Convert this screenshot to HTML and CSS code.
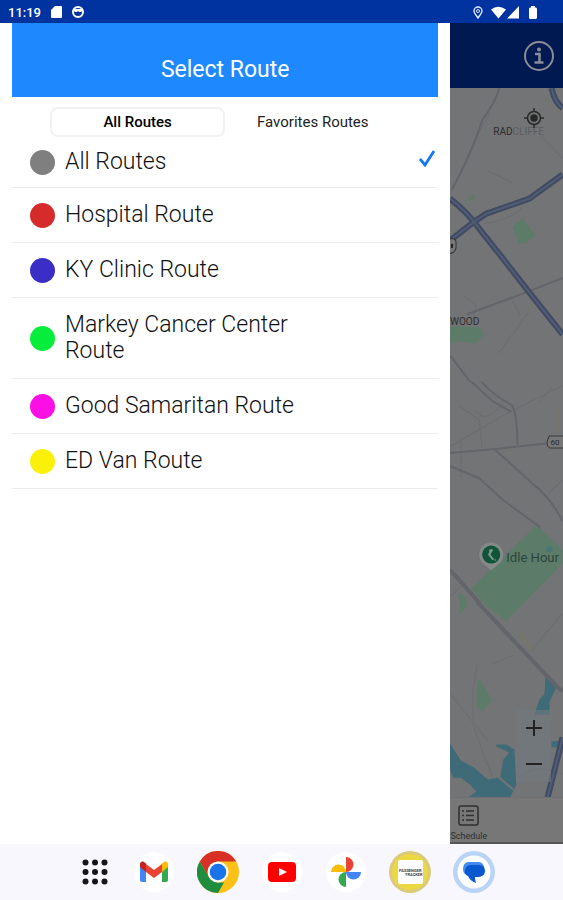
FILE: index.html
```html
<!DOCTYPE html>
<html lang="en">
<head>
  <meta charset="UTF-8">
  <meta name="viewport" content="width=device-width, initial-scale=1.0">
  <title>Select Route</title>
  <link rel="stylesheet" href="styles.css">
</head>
<body>
  <header class="status-bar">
    <span class="clock">11:19</span>
    <svg width="11" height="12" viewBox="0 0 11 12"><path d="M4 0h6a1 1 0 0 1 1 1v10a1 1 0 0 1-1 1H1a1 1 0 0 1-1-1V4z" fill="#fff"/></svg>
    <svg width="12" height="12" viewBox="0 0 12 12"><circle cx="6" cy="6" r="5" fill="none" stroke="#fff" stroke-width="2"/><path d="M2 3h8v2l-1 1H7L6 5 5 6H3L2 5z" fill="#fff"/></svg>
    <span class="status-icons">
      <svg width="10" height="13" viewBox="0 0 10 13" fill="none" stroke="#dfe8ff"><path d="M5 12C3 9 1 7 1 5a4 4 0 0 1 8 0c0 2-2 4-4 7z" stroke-width="1.4"/><circle cx="5" cy="5" r="1.5"/></svg>
      <svg width="30" height="13" viewBox="0 0 30 13" fill="#fff"><path d="M0 3.500Q7-2 15 3.500L7.500 12.500zM28 0v12.500H16z"/></svg>
      <svg width="8" height="13" viewBox="0 0 8 13" fill="#fff"><path d="M2 0h4v1.500h1l1 1V12l-1 1H1l-1-1V2.500l1-1h1z"/></svg>
    </span>
  </header>

  <main class="screen">
    <section class="drawer">
      <h1 class="drawer-title">Select Route</h1>
      <div class="tabs">
        <button class="tab active" type="button">All Routes</button>
        <button class="tab" type="button">Favorites Routes</button>
      </div>
      <ul class="routes">
        <li><button class="route" type="button"><span class="dot gray"></span><span class="name">All Routes</span>
          <svg class="check" width="16" height="17" viewBox="0 0 16 17"><path d="M1 9l5 6L15 1" fill="none" stroke="#1677f5" stroke-width="2.800"/></svg></button></li>
        <li><button class="route" type="button"><span class="dot red"></span><span class="name">Hospital Route</span></button></li>
        <li><button class="route" type="button"><span class="dot blue"></span><span class="name">KY Clinic Route</span></button></li>
        <li><button class="route" type="button"><span class="dot green"></span><span class="name">Markey Cancer Center Route</span></button></li>
        <li><button class="route" type="button"><span class="dot pink"></span><span class="name">Good Samaritan Route</span></button></li>
        <li><button class="route" type="button"><span class="dot yellow"></span><span class="name">ED Van Route</span></button></li>
      </ul>
    </section>

    <section class="behind">
      <div class="app-bar">
        <button class="info" type="button" aria-label="Info">
          <svg width="30" height="30" viewBox="0 0 30 30" fill="none" stroke="#8b8b96"><circle cx="15" cy="15" r="14" stroke-width="2"/><path d="M11 13h4.500v8M10.500 21.500h9" stroke-width="2.500"/><circle cx="15" cy="8.500" r="1" stroke-width="2"/></svg>
        </button>
      </div>

      <div class="map">
        <svg class="map-art" viewBox="451 88 112 709" preserveAspectRatio="xMinYMin slice">
          <!-- parks -->
          <g fill="#5d7b69">
            <path d="M513 226l10-8 13 16-10 9-7-1z"/>
            <path d="M466 201l8-7 3 2-6 4zM451 325l31 1 2 8-8 8-14-2-9 2-2-3z"/>
            <path d="M537 523l26 24v14l-56 57-18-13-17-19z"/>
            <path d="M478 679l3-3 12 22-10 10-6-5z"/>
            <path d="M462 590q10 9 3 17l-6 5q4-10 0-19z"/>
          </g>
          <!-- water -->
          <g fill="#3f6a78">
            <path d="M546 672l12 9-8 18v12h-15l5-15 5-5z"/>
            <path d="M451 740l11 17 13 7 14 12 12-3 3-17 6-7-13-6v-2h10l8 5 2 35-6 12-5 4h-42l13-9-6-7-9-7h-8l-4-12z"/>
            <path d="M552 738l11-1v7h-11z"/>
          </g>
          <path d="M499 773l15 13" stroke="#737475" stroke-width="2"/>
          <!-- minor streets -->
          <g fill="none" stroke="#6b6d70" stroke-width="1">
            <path d="M485 223q28-4 38-17M491 112l-12 22M541 135l22 23M488 170l25 12M465 295l12 9-3 13M513 299l8 15M530 310l-31 42M460 404l20 14 3 28M451 445l54-32 58-29M504 401q-13 16-21 13l-8-5M540 400l12-14M462 439v36M549 491l14-13M492 661l23-9M478 662l-4 24v36l8 22 12 31M451 594l13-12M451 690l38 48M519 774q16-15 44-4M563 610l-31 38"/>
          </g>
          <g fill="none" stroke="#63656b" stroke-width="2">
            <path d="M500 88q-3 13-17 32-8 27-30 69M468 313l54-20 41-16M472 380l22 20 18 10M482 380q14 15 30 23 6 7 6 40M451 451l45-4 56-6M496 448l39 35q17 14 28 36M451 464l29 12 24 22 37 27M451 354l20 26"/>
            <path d="M451 567l30 34M478 599l79 84 6 5" stroke-width="4"/>
          </g>
          <path d="M521 630l10 16" stroke="#77766c" stroke-width="4"/>
          <path d="M559 405v25" stroke="#77756a" stroke-width="2"/>
          <!-- highways -->
          <g fill="none" stroke="#3f4a63" stroke-width="6">
            <path d="M451 198q17 13 30 31 27 34 51 65l31 39M452 239l23-18 12-8 43-15 33-24M552 88q3 14 11 20M547 798l16-64"/>
          </g>
          <g fill="none" stroke="#525d75" stroke-width="2">
            <path d="M451 198q17 13 30 31 27 34 51 65l31 39M452 239l23-18 12-8 43-15 33-24M552 88q3 14 11 20M547 798l16-64"/>
          </g>
          <!-- road shields -->
          <path d="M447 238h7q3 0 3 4v5q-1 5-7 6h-3z" fill="#777" stroke="#333"/>
          <path d="M453 243v4" stroke="#222" stroke-width="2"/>
          <path d="M550 434h16v12h-16q-5-4 0-12z" fill="#777" stroke="#3b3b3b"/>
          <text x="551" y="443" class="shield">60</text>
          <!-- golf pin -->
          <path d="M492 568l-8-7a12 12 0 1 1 16 0z" fill="#858987"/>
          <circle cx="492" cy="552" r="9" fill="#10543a"/>
          <path d="M493 547l-3 5 4 5M491 547v4M496 557v1" stroke="#859a8f" stroke-width="2" fill="none"/>
          <circle cx="550" cy="547" r="3" fill="#477578"/>
          <text x="494" y="135" class="place">RAD<tspan class="faded">CLIFFE</tspan></text>
          <text x="451" y="324" class="place">WOOD</text>
          <text x="507" y="559" class="poi">Idle Hour</text>
        </svg>
        <button class="locate" type="button" aria-label="My location">
          <svg width="20" height="20" viewBox="0 0 20 20" fill="none" stroke="#282828" stroke-width="1.500"><circle cx="10" cy="10" r="6.500"/><circle cx="10" cy="10" r="3" fill="#282828"/><path d="M10 0v4M10 16v4M0 10h4M16 10h4"/></svg>
        </button>
        <div class="zoom">
          <button type="button" aria-label="Zoom in"><svg width="16" height="16" viewBox="0 0 16 16"><path d="M8 0v16M0 8h16" stroke="#222" stroke-width="2"/></svg></button>
          <button type="button" aria-label="Zoom out"><svg width="16" height="16" viewBox="0 0 16 16"><path d="M0 8h16" stroke="#222" stroke-width="2"/></svg></button>
        </div>
      </div>

      <nav class="tab-bar">
        <a class="schedule" href="#schedule">
          <svg width="21" height="21" viewBox="0 0 21 21" fill="none" stroke="#2f2f2f" stroke-width="1.500"><rect x="1" y="1" width="19" height="19" rx="2"/><path d="M4 6h2M8 6h8M4 10.500h2M8 10.500h8M4 15h2M8 15h8"/></svg>
          <span>Schedule</span>
        </a>
      </nav>
    </section>
  </main>

  <footer class="dock">
    <button class="apps" type="button" aria-label="All apps">
      <svg width="26" height="26" viewBox="0 0 26 26"><g fill="#15151a"><circle cx="3.500" cy="3.500" r="3"/><circle cx="13" cy="3.500" r="3"/><circle cx="22.500" cy="3.500" r="3"/><circle cx="3.500" cy="13" r="3"/><circle cx="13" cy="13" r="3"/><circle cx="22.500" cy="13" r="3"/><circle cx="3.500" cy="22.500" r="3"/><circle cx="13" cy="22.500" r="3"/><circle cx="22.500" cy="22.500" r="3"/></g></svg>
    </button>
    <button type="button" aria-label="Gmail">
      <svg viewBox="0 0 42 42"><circle cx="21" cy="21" r="20" fill="#fff"/><path d="M7 14v15a2 2 0 0 0 2 2h4V18z" fill="#4285f4"/><path d="M29 18v13h4a2 2 0 0 0 2-2V14z" fill="#34a853"/><path d="M29 12.500l2-1.500c2-1 4 0 4 2.500V16l-6 5z" fill="#fbbc04"/><path d="M13 13l8 6 8-6v8l-8 6-8-6z" fill="#ea4335"/><path d="M13 12.500L11 11c-2-1-4 0-4 2.500V16l6 5z" fill="#c5221f"/></svg>
    </button>
    <button type="button" aria-label="Chrome">
      <svg viewBox="0 0 42 42"><circle cx="21" cy="21" r="21" fill="#fbc116"/><path d="M2.800 10.500A21 21 0 0 1 39.200 10.500H21L11.900 26.200z" fill="#d93025"/><path d="M2.800 10.500L11.900 26.200 21 31.500h6L21 42A21 21 0 0 1 2.800 10.500z" fill="#1e8e3e"/><circle cx="21" cy="21" r="10.500" fill="#fff"/><circle cx="21" cy="21" r="8.300" fill="#1a73e8"/></svg>
    </button>
    <button type="button" aria-label="YouTube">
      <svg viewBox="0 0 42 42"><circle cx="21" cy="21" r="20" fill="#fff"/><rect x="7" y="11" width="28" height="20" rx="4" fill="#f00"/><path d="M18 17v8l8-4z" fill="#fff"/></svg>
    </button>
    <button type="button" aria-label="Photos">
      <svg viewBox="0 0 42 42"><circle cx="21" cy="21" r="20" fill="#fff"/><path d="M21 6a7.500 7.500 0 0 1 0 15z" fill="#ea4335"/><path d="M36 21a7.500 7.500 0 0 1-15 0z" fill="#4285f4"/><path d="M21 36a7.500 7.500 0 0 1 0-15z" fill="#34a853"/><path d="M6 21a7.500 7.500 0 0 1 15 0z" fill="#fbbc04"/></svg>
    </button>
    <button type="button" aria-label="Passenger">
      <svg viewBox="0 0 42 42"><circle cx="21" cy="21" r="21" fill="#d9ca7c"/><circle cx="21" cy="21" r="18" fill="#ecd840"/><rect x="9" y="9" width="25" height="24" rx="2" fill="#fff"/><text x="10" y="21" class="logo-text">PASSENGER</text><text x="16" y="25" class="logo-text">TRACKER</text></svg>
    </button>
    <button type="button" aria-label="Messages">
      <svg viewBox="0 0 42 42"><circle cx="21" cy="21" r="21" fill="#b9d4f6"/><circle cx="21" cy="21" r="16.500" fill="#fff"/><path d="M15 11h10q5 0 6 5l-3 8H14q-4-1-4-6 0-6 5-7z" fill="#438bf2"/><path d="M18 14h8q6 0 6 6 0 5-6 6h-4q0 3 1 6-6-2-8-7-4-2-3-6 1-5 6-5z" fill="#0b57d0"/></svg>
    </button>
  </footer>
</body>
</html>
```
FILE: styles.css
```css
* {
  box-sizing: border-box;
}

body {
  margin: 0;
  min-height: 100vh;
  display: flex;
  flex-direction: column;
  font-family: Roboto, sans-serif;
  background: #fff;
  color: #222;
}

button {
  padding: 0;
  border: 0;
  background: none;
  font: inherit;
  color: inherit;
  cursor: pointer;
}

svg {
  display: block;
}

.status-bar {
  display: flex;
  align-items: center;
  gap: 10px;
  height: 23px;
  padding: 1px 26px 0 8px;
  background: #0033a0;
  color: #fff;
  font-size: 13px;
  font-weight: 500;
}

.status-icons {
  display: flex;
  gap: 8px;
  margin-left: auto;
}

.screen {
  flex: 1;
  display: flex;
}

/* drawer */
.drawer {
  width: 80%;
  padding: 0 12px;
  background: #fff;
}

.drawer-title {
  margin: 0;
  padding: 32px 0 12px;
  background: #1e88ff;
  color: #fff;
  font-size: 23px;
  font-weight: 400;
  line-height: 30px;
  text-align: center;
}

.tabs {
  display: flex;
  padding: 10px 38px 0;
}

.tab {
  flex: 1;
  height: 30px;
  border: 2px solid transparent;
  border-radius: 8px;
  font-size: 15px;
}

.tab.active {
  border-color: #f1f1f1;
  font-weight: 500;
  color: #000;
}

.routes {
  margin: 0;
  padding: 0;
  list-style: none;
}

.route {
  display: flex;
  align-items: center;
  gap: 10px;
  width: 100%;
  padding: 14px 3px 14px 18px;
  border-bottom: 1px solid #ececec;
  color: #111;
  font-size: 23px;
  font-weight: 300;
  line-height: 26px;
  text-align: left;
}

li:first-child .route {
  padding-top: 12px;
  padding-bottom: 12px;
}

.dot {
  flex: none;
  width: 25px;
  height: 25px;
  border-radius: 50%;
}

.gray { background: #7f7f7f; }
.red { background: #d62b2b; }
.blue { background: #3a2ec6; }
.green { background: #06ed3c; }
.pink { background: #fc0fe4; }
.yellow { background: #fbf009; }

.name {
  max-width: 60%;
}

.check {
  margin: 0 0 8px auto;
}

/* dimmed map screen */
.behind {
  flex: 1;
  display: flex;
  flex-direction: column;
  background: #777;
}

.app-bar {
  display: flex;
  align-items: center;
  justify-content: flex-end;
  height: 65px;
  padding-right: 9px;
  background: #001950;
}

.map {
  position: relative;
  flex: 1;
  overflow: hidden;
  background: #737475;
}

.map-art {
  position: absolute;
  width: 100%;
  height: 100%;
}

.place {
  font-size: 10px;
  fill: #2e2e2e;
}

.faded {
  fill: #5c5e60;
}

.poi {
  font-size: 13px;
  fill: #29463b;
}

.shield {
  font-size: 8px;
  fill: #2a2a2a;
}

.locate {
  position: absolute;
  top: 20px;
  right: 19px;
}

.zoom {
  position: absolute;
  right: 12px;
  bottom: 15px;
  display: grid;
  background: rgba(112, 122, 126, 0.6);
}

.zoom button {
  display: grid;
  place-items: center;
  width: 35px;
  height: 36px;
}

.tab-bar {
  height: 47px;
  border-top: 1px solid #707070;
  border-bottom: 2px solid #555;
}

.schedule {
  display: inline-flex;
  flex-direction: column;
  align-items: center;
  gap: 4px;
  padding-top: 7px;
  color: #303030;
  font-size: 9px;
  line-height: 12px;
  text-decoration: none;
}

/* launcher dock */
.dock {
  display: flex;
  align-items: center;
  justify-content: center;
  gap: 22px;
  height: 56px;
  padding-left: 10px;
  background: #f9f7fe;
}

.dock button {
  width: 42px;
}

.dock .apps {
  display: grid;
  place-items: center;
  width: 32px;
}

.logo-text {
  font-size: 4px;
  font-weight: 700;
  fill: #444;
}
```
